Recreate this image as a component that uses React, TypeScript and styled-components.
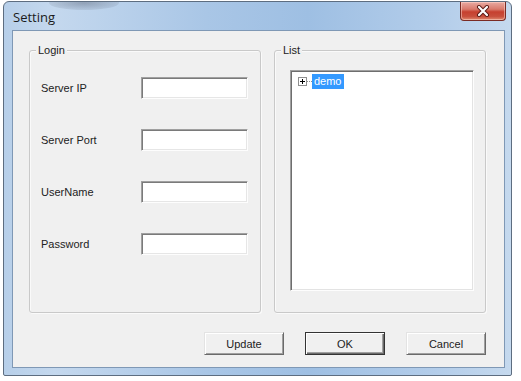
import React from "react";
import styled, { createGlobalStyle } from "styled-components";

const Global = createGlobalStyle`
  html, body { margin: 0; padding: 0; background: #ffffff; }
  body { font-family: "Liberation Sans", Arial, sans-serif; }
  * { box-sizing: border-box; }
`;

const Window = styled.div`
  margin: 1px 0 0 3px;
  width: 509px;
  height: 375px;
  display: flex;
  flex-direction: column;
  padding: 0 6px 7px 8px;
  border: 1px solid #5d6d80;
  border-radius: 6px 6px 2px 2px;
  background: linear-gradient(90deg, #b7cfe9 0%, #c4d8ee 10%, #a9c6e6 40%, #9ebfe3 60%, #b3cdea 85%, #c5d9ee 100%);
  position: relative;
  overflow: hidden;
`;

const Streak = styled.div`
  position: absolute;
  left: 45px;
  top: -6px;
  width: 70px;
  height: 14px;
  border-radius: 50%;
  background: radial-gradient(ellipse at center, rgba(90, 100, 120, 0.45), rgba(90, 100, 120, 0));
`;

const TitleBar = styled.div`
  height: 28px;
  display: flex;
  align-items: center;
  justify-content: space-between;
  position: relative;
`;

const Title = styled.span`
  font-family: "Open Sans", "Noto Sans", sans-serif;
  font-size: 13px;
  color: #1a1a1a;
  margin-left: 1px;
  margin-top: 2px;
`;

const CloseButton = styled.div`
  align-self: flex-start;
  width: 46px;
  height: 19px;
  margin-right: -1px;
  border: 1px solid #7a2b24;
  border-top: none;
  border-radius: 0 0 4px 4px;
  background: linear-gradient(180deg, #e9aaa2 0%, #d97a6c 40%, #c6402f 55%, #c84f3c 80%, #e08a70 100%);
  display: flex;
  align-items: center;
  justify-content: center;
  box-shadow: inset 0 0 0 1px rgba(255, 220, 210, 0.5);
`;

const Client = styled.div`
  flex: 1;
  background: #f0f0f0;
  border: 1px solid #7f98b5;
  display: flex;
  flex-direction: column;
  padding: 19px 18px 0 16px;
`;

const Groups = styled.div`
  display: flex;
  gap: 13px;
  height: 263px;
`;

const GroupBox = styled.div<{ $w: number; $pt: number; $pl: number }>`
  position: relative;
  width: ${(p) => p.$w}px;
  height: 100%;
  border: 1px solid #c9c9c9;
  border-radius: 3px;
  box-shadow: inset 1px 1px 0 #fafafa, 1px 1px 0 #fafafa;
  padding: ${(p) => p.$pt}px 0 0 ${(p) => p.$pl}px;
`;

const Legend = styled.span`
  position: absolute;
  top: -8px;
  left: 6px;
  padding: 0 2px;
  background: #f0f0f0;
  font-size: 11px;
  line-height: 14px;
  color: #222;
`;

const Rows = styled.div`
  display: flex;
  flex-direction: column;
  gap: 30px;
`;

const Row = styled.div`
  display: flex;
  align-items: center;
  height: 22px;
`;

const Label = styled.span`
  width: 100px;
  font-size: 11px;
  color: #222;
`;

const TextBox = styled.div`
  width: 107px;
  height: 22px;
  background: #fff;
  border-top: 1px solid #a0a0a0;
  border-left: 1px solid #a0a0a0;
  border-right: 1px solid #fdfdfd;
  border-bottom: 1px solid #fdfdfd;
  box-shadow: inset 1px 1px 0 #7a7a7a, inset -1px -1px 0 #e6e6e6;
`;

const Tree = styled.div`
  width: 184px;
  height: 221px;
  background: #fff;
  border-top: 1px solid #a0a0a0;
  border-left: 1px solid #a0a0a0;
  border-right: 1px solid #fdfdfd;
  border-bottom: 1px solid #fdfdfd;
  box-shadow: inset 1px 1px 0 #6e6e6e, inset -1px -1px 0 #e3e3e3;
  padding: 3px 0 0 7px;
`;

const TreeItem = styled.div`
  display: flex;
  align-items: center;
  height: 15px;
`;

const Expander = styled.div`
  width: 9px;
  height: 9px;
  border: 1px solid #8f8f8f;
  background: #fff;
  display: flex;
  align-items: center;
  justify-content: center;
`;

const Connector = styled.div`
  width: 5px;
  border-top: 1px dotted #8f8f8f;
`;

const ItemText = styled.span<{ $selected?: boolean }>`
  font-size: 11px;
  line-height: 15px;
  padding: 0 3px 0 2px;
  color: ${(p) => (p.$selected ? "#fff" : "#000")};
  background: ${(p) => (p.$selected ? "#3399ff" : "transparent")};
`;

const ButtonRow = styled.div`
  display: flex;
  justify-content: flex-end;
  gap: 21px;
  margin-top: 19px;
`;

const Button = styled.div<{ $default?: boolean }>`
  width: 80px;
  height: 23px;
  display: flex;
  align-items: center;
  justify-content: center;
  font-size: 11px;
  color: #222;
  background: #f0f0f0;
  border-top: 1px solid ${(p) => (p.$default ? "#333" : "#e3e3e3")};
  border-left: 1px solid ${(p) => (p.$default ? "#333" : "#e3e3e3")};
  border-right: 1px solid ${(p) => (p.$default ? "#333" : "#6a6a6a")};
  border-bottom: 1px solid ${(p) => (p.$default ? "#333" : "#6a6a6a")};
  box-shadow: ${(p) =>
    p.$default
      ? "inset 1px 1px 0 #fff, inset -1px -1px 0 #6a6a6a, inset -2px -2px 0 #a0a0a0"
      : "inset 1px 1px 0 #fff, inset -1px -1px 0 #a0a0a0"};
`;

const fields = ["Server IP", "Server Port", "UserName", "Password"];

export default function App() {
  return (
    <>
      <Global />
      <Window>
        <Streak />
        <TitleBar>
          <Title>Setting</Title>
          <CloseButton>
            <svg width="14" height="12" viewBox="0 0 14 12">
              <path d="M3 2 L11 10 M11 2 L3 10" stroke="#5a1a14" strokeWidth="4" strokeLinecap="round" />
              <path d="M3 2 L11 10 M11 2 L3 10" stroke="#ffffff" strokeWidth="2.2" strokeLinecap="round" />
            </svg>
          </CloseButton>
        </TitleBar>
        <Client>
          <Groups>
            <GroupBox $w={233} $pt={26} $pl={11}>
              <Legend>Login</Legend>
              <Rows>
                {fields.map((f) => (
                  <Row key={f}>
                    <Label>{f}</Label>
                    <TextBox />
                  </Row>
                ))}
              </Rows>
            </GroupBox>
            <GroupBox $w={213} $pt={19} $pl={15}>
              <Legend>List</Legend>
              <Tree>
                <TreeItem>
                  <Expander>
                    <svg width="7" height="7" viewBox="0 0 7 7">
                      <path d="M1 3.5 H6 M3.5 1 V6" stroke="#000" strokeWidth="1" />
                    </svg>
                  </Expander>
                  <Connector />
                  <ItemText $selected>demo</ItemText>
                </TreeItem>
              </Tree>
            </GroupBox>
          </Groups>
          <ButtonRow>
            <Button>Update</Button>
            <Button $default>OK</Button>
            <Button>Cancel</Button>
          </ButtonRow>
        </Client>
      </Window>
    </>
  );
}
